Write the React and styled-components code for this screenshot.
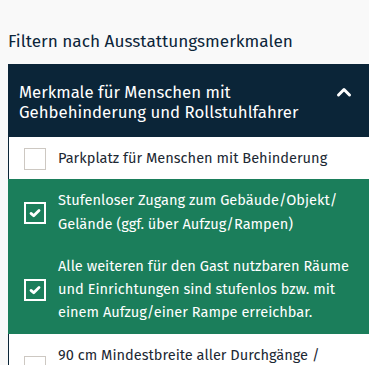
import React from "react";
import styled, { createGlobalStyle } from "styled-components";

const Global = createGlobalStyle`
  html, body { margin: 0; padding: 0; background: #f9f9f9; }
  body { font-family: "Fira Sans", Lato, "Noto Sans", sans-serif; }
`;

const Page = styled.div`
  padding: 33px 0 0 8px;
`;

const Title = styled.h2`
  margin: 0 0 14px 0;
  font-size: 17.2px;
  font-weight: 400;
  line-height: 17px;
  color: #0c2539;
`;

const Panel = styled.div`
  width: 380px;
  background: #fff;
`;

const Header = styled.button`
  display: flex;
  align-items: center;
  justify-content: space-between;
  width: 100%;
  box-sizing: border-box;
  height: 73px;
  padding: 0 0 0 11px;
  border: 0;
  background: #0b2538;
  color: #fff;
  font: inherit;
  font-size: 16.8px;
  line-height: 20px;
  text-align: left;
  cursor: pointer;
`;

const HeaderText = styled.span`
  display: block;
  padding-top: 2px;
`;

const Chevron = styled.svg`
  width: 16px;
  height: 12px;
  margin-right: 36px;
  margin-top: -17px;
  flex: none;
`;

const Row = styled.label`
  display: flex;
  align-items: center;
  gap: 12px;
  padding: 10px 12px 9px 15px;
  background: ${(p) => (p.$checked ? "#1b7e5b" : "#fff")};
  color: ${(p) => (p.$checked ? "#fff" : "#1c2833")};
  border-left: 1px solid ${(p) => (p.$checked ? "#1b7e5b" : "#0b2538")};
  font-size: 14.6px;
  line-height: 23.3px;
`;

const Box = styled.span`
  flex: none;
  box-sizing: border-box;
  width: 22px;
  height: 22px;
  border: ${(p) => (p.$checked ? "2px solid #fff" : "1.5px solid #cdc8c2")};
  background: ${(p) => (p.$checked ? "#1b7e5b" : "#fff")};
  display: flex;
  align-items: center;
  justify-content: center;
`;

const RowText = styled.span`
  flex: none;
  width: 298px;
`;

const Check = () => (
  <svg width="12" height="10" viewBox="0 0 12 10">
    <path d="M2 5.4 L4.7 7.8 L10 2.6" fill="none" stroke="#fff" strokeWidth="2.8" strokeLinecap="round" strokeLinejoin="round" />
  </svg>
);

const items = [
  { t: "Parkplatz für Menschen mit Behinderung", c: false },
  { t: "Stufenloser Zugang zum Gebäude/Objekt/ Gelände (ggf. über Aufzug/Rampen)", c: true },
  { t: "Alle weiteren für den Gast nutzbaren Räume und Einrichtungen sind stufenlos bzw. mit einem Aufzug/einer Rampe erreichbar.", c: true },
  { t: "90 cm Mindestbreite aller Durchgänge / Türen", c: false },
];

export default function App() {
  return (
    <Page>
      <Global />
      <Title>Filtern nach Ausstattungsmerkmalen</Title>
      <Panel>
        <Header>
          <HeaderText>
            Merkmale für Menschen mit
            <br />
            Gehbehinderung und Rollstuhlfahrer
          </HeaderText>
          <Chevron viewBox="0 0 16 12">
            <path d="M2.5 9 L8 3.5 L13.5 9" fill="none" stroke="#fff" strokeWidth="3" strokeLinecap="round" strokeLinejoin="round" />
          </Chevron>
        </Header>
        {items.map((it, i) => (
          <Row key={i} $checked={it.c}>
            <Box $checked={it.c}>{it.c && <Check />}</Box>
            <RowText>{it.t}</RowText>
          </Row>
        ))}
      </Panel>
    </Page>
  );
}
